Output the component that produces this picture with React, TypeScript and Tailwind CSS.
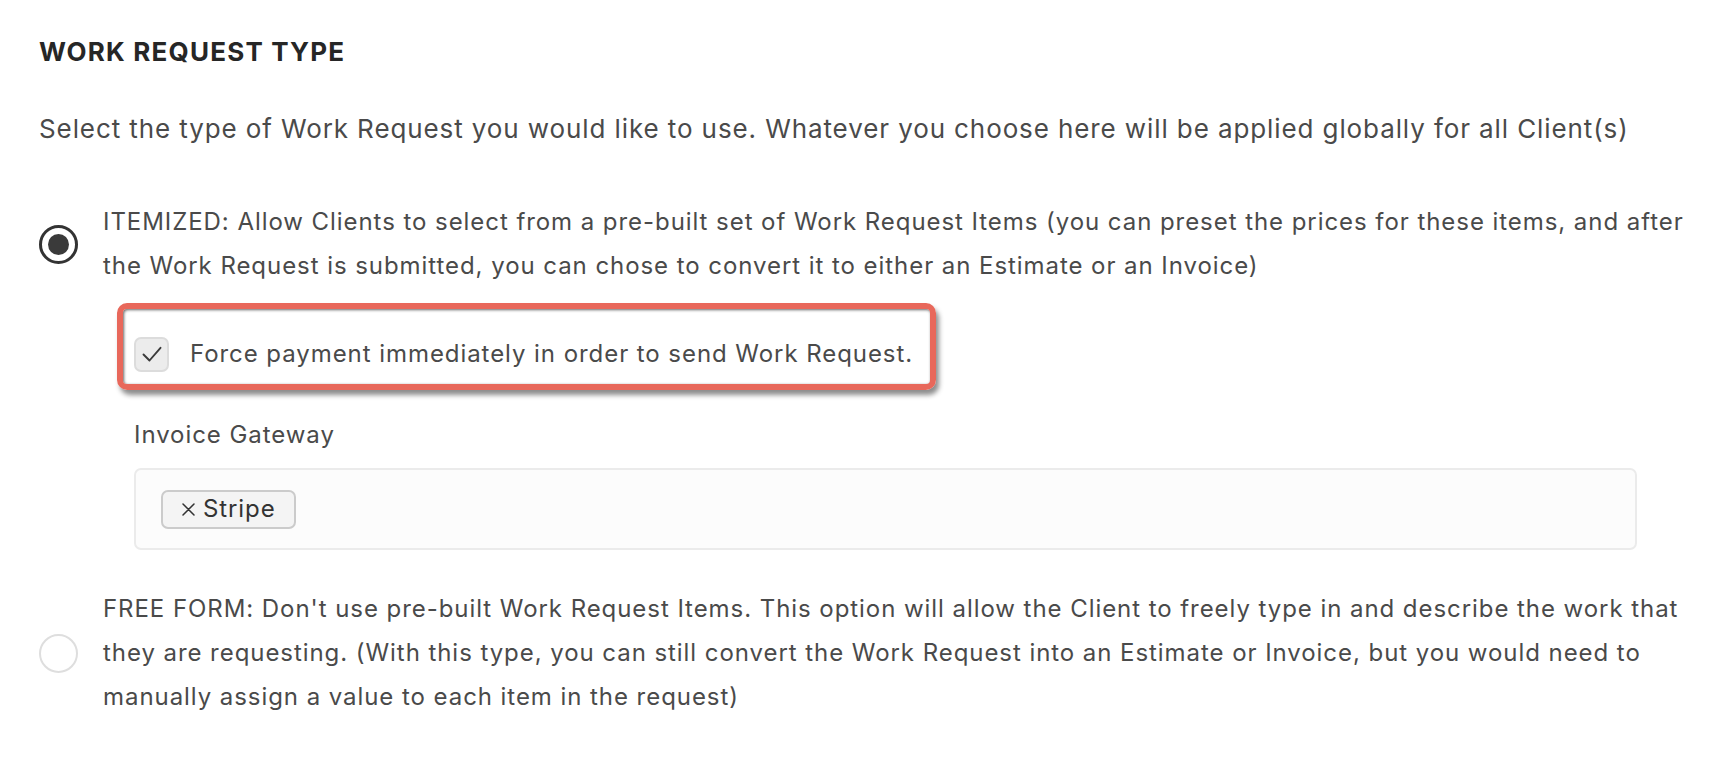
import React from "react";

export default function App() {
  return (
    <div
      className="min-h-[784px] w-full bg-white pl-[39px] pr-[10px] pt-[36px] text-[#4a4a4a]"
      style={{ fontFamily: "Inter, 'Noto Sans', sans-serif" }}
    >
      <h2 className="text-[26px] font-bold leading-[32px] tracking-[1.2px] text-[#262626]">
        WORK REQUEST TYPE
      </h2>
      <p className="mt-[39px] whitespace-nowrap text-[26px] leading-[44px] tracking-[0.9px]">
        Select the type of Work Request you would like to use. Whatever you choose here will be applied globally for all Client(s)
      </p>

      {/* Option 1 */}
      <div className="mt-[49px] flex items-center">
        <div className="flex h-[39px] w-[39px] shrink-0 items-center justify-center rounded-full border-[3px] border-[#333333] bg-white">
          <div className="h-[21px] w-[21px] rounded-full bg-[#3a3a3a]" />
        </div>
        <div className="ml-[25px] whitespace-nowrap text-[24px] leading-[44px] tracking-[0.94px]">
          ITEMIZED: Allow Clients to select from a pre-built set of Work Request Items (you can preset the prices for these items, and after
          <br />
          the Work Request is submitted, you can chose to convert it to either an Estimate or an Invoice)
        </div>
      </div>

      <div className="ml-[78px]">
        <div className="mt-[15px] flex w-[819px] items-center rounded-[10px] border-[6px] border-[#e8685b] pb-[12px] pl-[11px] pt-[27px] shadow-[3px_5px_5px_rgba(0,0,0,0.45),inset_1px_1px_3px_rgba(0,0,0,0.6)]">
          <div className="flex h-[35px] w-[35px] shrink-0 items-center justify-center rounded-[7px] border-2 border-[#dcdcdc] bg-[#ececec]">
            <svg width="22" height="20" viewBox="0 0 22 20" fill="none">
              <path d="M2.5 10.5 L8.5 16.5 L19.5 3.8" stroke="#3a3a3a" strokeWidth="1.9" strokeLinecap="round" strokeLinejoin="round" />
            </svg>
          </div>
          <span className="ml-[21px] whitespace-nowrap text-[24px] leading-[36px] tracking-[0.94px]">
            Force payment immediately in order to send Work Request.
          </span>
        </div>

        <div className="ml-[17px]">
          <div className="mt-[23px] text-[24px] leading-[44px] tracking-[0.94px]">Invoice Gateway</div>
          <div className="mt-[11px] flex h-[82px] w-[1503px] items-center rounded-[7px] border-2 border-[#ebebeb] bg-[#fcfcfc] pl-[25px]">
            <div className="flex h-[39px] items-center rounded-[7px] border-2 border-[#cbcbcb] bg-[#f4f4f4] pl-[19px] pr-[18px]">
              <svg width="13" height="13" viewBox="0 0 13 13" fill="none">
                <path d="M1 1 L12 12 M12 1 L1 12" stroke="#333" strokeWidth="1.5" strokeLinecap="round" />
              </svg>
              <span className="ml-[8px] text-[24px] leading-[30px] tracking-[0.9px] text-[#333]">Stripe</span>
            </div>
          </div>
        </div>
      </div>

      {/* Option 2 */}
      <div className="mt-[37px] flex items-center">
        <div className="h-[39px] w-[39px] shrink-0 rounded-full border-2 border-[#dedede] bg-white" />
        <div className="ml-[25px] whitespace-nowrap text-[24px] leading-[44px] tracking-[0.94px]">
          FREE FORM: Don't use pre-built Work Request Items. This option will allow the Client to freely type in and describe the work that
          <br />
          they are requesting. (With this type, you can still convert the Work Request into an Estimate or Invoice, but you would need to
          <br />
          manually assign a value to each item in the request)
        </div>
      </div>
    </div>
  );
}
